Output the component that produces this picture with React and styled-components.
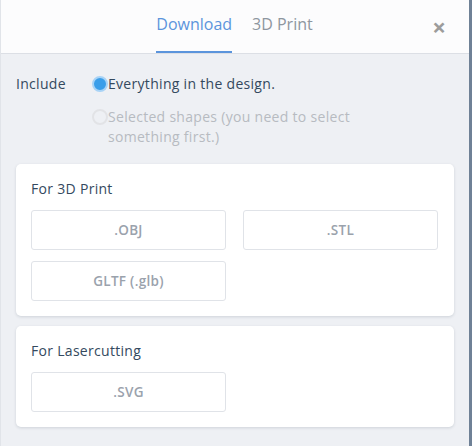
import styled, { createGlobalStyle } from "styled-components";

const GlobalStyle = createGlobalStyle`
  html, body {
    margin: 0;
    padding: 0;
    background: #eef0f4;
  }
  * {
    box-sizing: border-box;
  }
`;

const formats3d = [".OBJ", ".STL", "GLTF (.glb)"];

const App = () => {
  return (
    <>
      <GlobalStyle />
      <Frame>
        <Panel>
          <Header>
            <Tabs>
              <Tab $active>Download</Tab>
              <Tab>3D Print</Tab>
            </Tabs>
            <Close>×</Close>
          </Header>
          <Body>
            <IncludeRow>
              <Label>Include</Label>
              <Options>
                <Option>
                  <Radio $checked />
                  <span>Everything in the design.</span>
                </Option>
                <Option $disabled>
                  <Radio />
                  <span>
                    Selected shapes (you need to select
                    <br />
                    something first.)
                  </span>
                </Option>
              </Options>
            </IncludeRow>

            <Card>
              <CardTitle>For 3D Print</CardTitle>
              <ButtonGrid>
                {formats3d.map((f) => (
                  <FormatButton key={f}>{f}</FormatButton>
                ))}
              </ButtonGrid>
            </Card>

            <Card>
              <CardTitle>For Lasercutting</CardTitle>
              <ButtonGrid>
                <FormatButton>.SVG</FormatButton>
              </ButtonGrid>
            </Card>
          </Body>
        </Panel>
      </Frame>
    </>
  );
};

export default App;

const Frame = styled.div`
  display: flex;
  width: 472px;
  height: 446px;
  font-family: "Open Sans", "Noto Sans", sans-serif;
`;

const Panel = styled.div`
  flex: 1;
  display: flex;
  flex-direction: column;
  background: #eef0f4;
  border-left: 1px solid #e1e4e9;
  border-right: 3px solid #6f8196;
`;

const Header = styled.div`
  position: relative;
  height: 54px;
  background: #fcfcfd;
  border-bottom: 1px solid #dcdfe5;
  display: flex;
  justify-content: center;
`;

const Tabs = styled.div`
  display: flex;
  gap: 20px;
  margin-left: -1px;
`;

const Tab = styled.div`
  display: flex;
  align-items: center;
  height: 100%;
  padding-bottom: 3px;
  font-size: 16px;
  color: ${(p) => (p.$active ? "#5b94dc" : "#8e969f")};
  border-bottom: 2px solid ${(p) => (p.$active ? "#5b94dc" : "transparent")};
  margin-bottom: -1px;
`;

const Close = styled.div`
  position: absolute;
  right: 23px;
  top: 12px;
  font-size: 24px;
  font-weight: 700;
  color: #9c9c9c;
  line-height: 30px;
`;

const Body = styled.div`
  padding: 20px 15px 0 15px;
  display: flex;
  flex-direction: column;
  gap: 10px;
`;

const IncludeRow = styled.div`
  display: flex;
  margin-bottom: 7px;
`;

const Label = styled.div`
  width: 76px;
  font-size: 14px;
  line-height: 20px;
  letter-spacing: 0.3px;
  color: #34495e;
`;

const Options = styled.div`
  display: flex;
  flex-direction: column;
  gap: 13px;
`;

const Option = styled.div`
  display: flex;
  align-items: flex-start;
  font-size: 14px;
  line-height: 20px;
  letter-spacing: 0.3px;
  color: ${(p) => (p.$disabled ? "#b7bbc1" : "#34495e")};
`;

const Radio = styled.span`
  width: 16px;
  height: 16px;
  margin-top: 2px;
  border-radius: 50%;
  flex-shrink: 0;
  background: ${(p) => (p.$checked ? "#3a9ee9" : "#eef0f4")};
  border: 2px solid ${(p) => (p.$checked ? "#a8d3f6" : "#e2e3e6")};
`;

const Card = styled.div`
  background: #fff;
  border-radius: 5px;
  box-shadow: 0 1px 3px rgba(60, 75, 95, 0.18);
  padding: 15px 15px 15px 15px;
`;

const CardTitle = styled.div`
  font-size: 14px;
  line-height: 20px;
  letter-spacing: 0.3px;
  color: #34495e;
  margin-bottom: 11px;
`;

const ButtonGrid = styled.div`
  display: grid;
  grid-template-columns: 195px 195px;
  column-gap: 17px;
  row-gap: 11px;
`;

const FormatButton = styled.div`
  height: 40px;
  display: flex;
  align-items: center;
  justify-content: center;
  border: 1px solid #e0e3e8;
  border-radius: 3px;
  font-size: 13.5px;
  font-weight: 600;
  letter-spacing: 0.3px;
  color: #9aa2ac;
`;
